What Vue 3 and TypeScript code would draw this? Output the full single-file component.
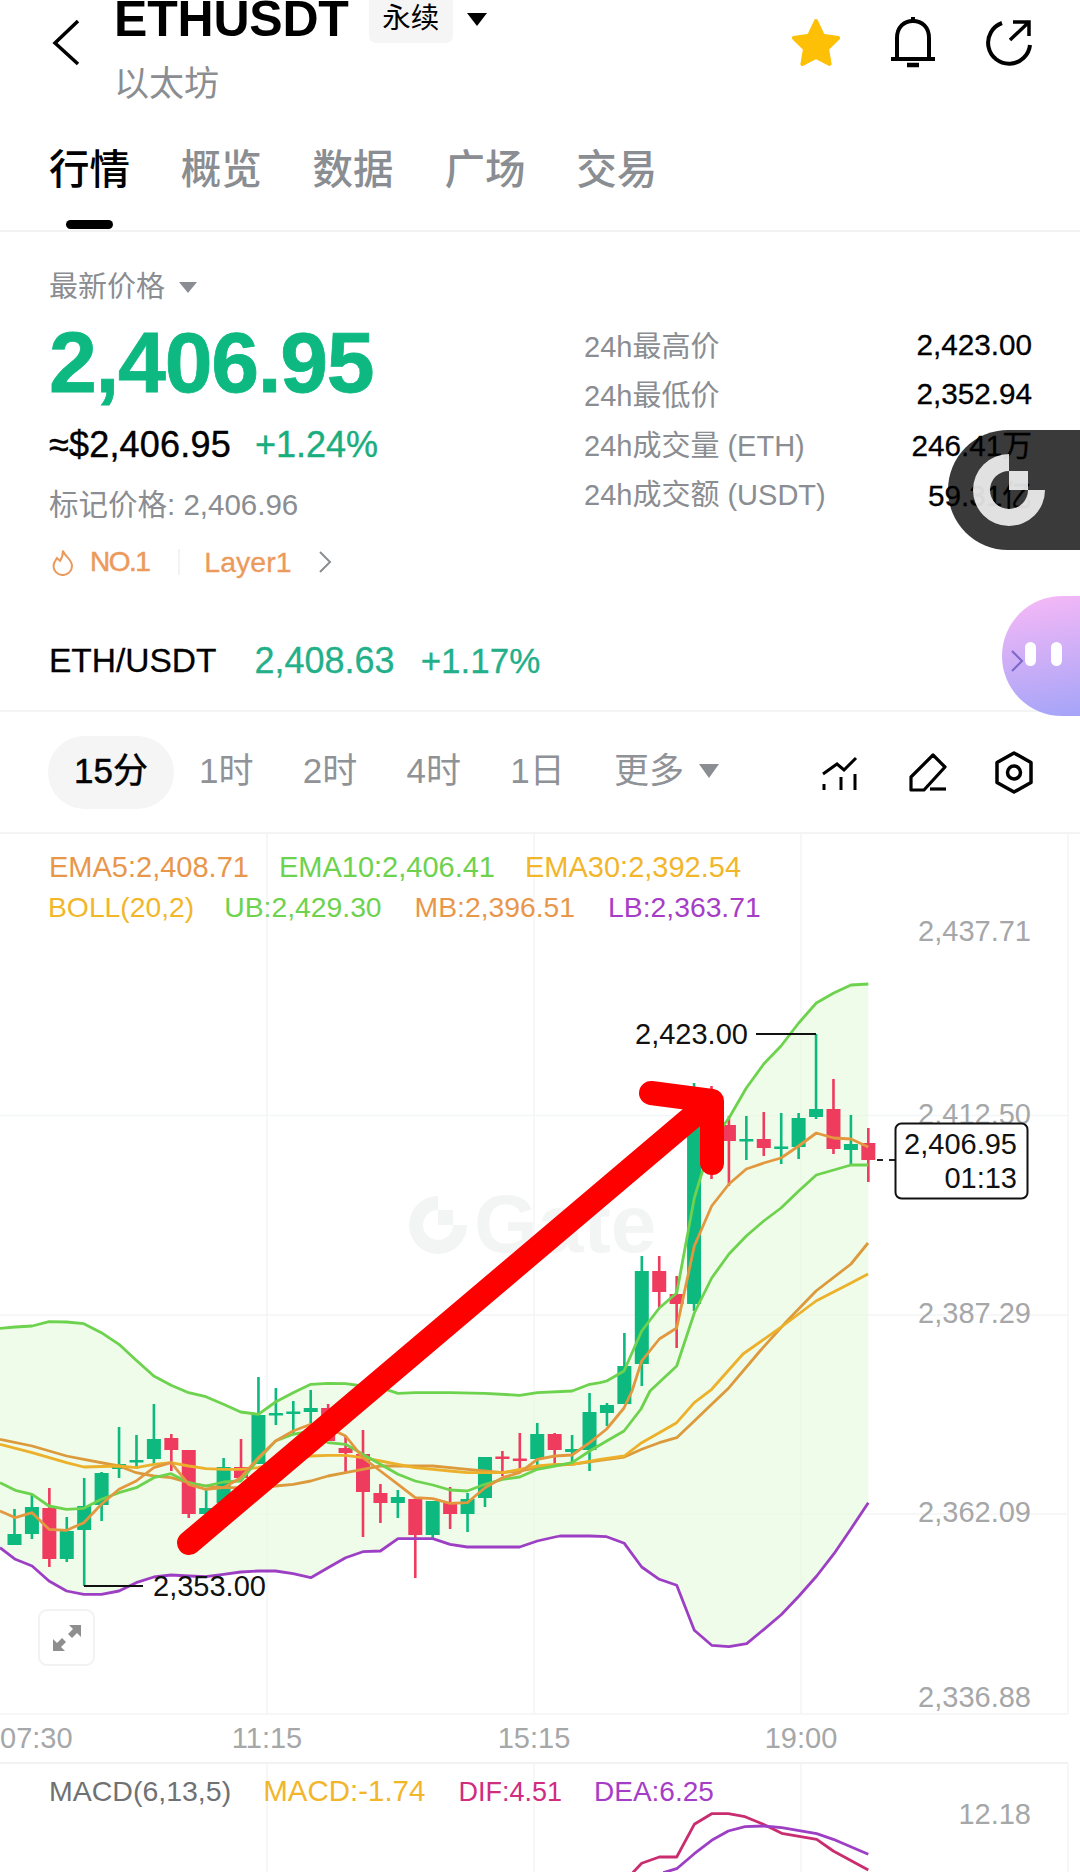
<script setup lang="ts">
type Pt = [number, number];

const tabs = ['行情', '概览', '数据', '广场', '交易'];
const stats = [
  { label: '24h最高价', value: '2,423.00' },
  { label: '24h最低价', value: '2,352.94' },
  { label: '24h成交量 (ETH)', value: '246.41万' },
  { label: '24h成交额 (USDT)', value: '59.31亿' },
];
const periods = ['1时', '2时', '4时', '1日'];

// points were read off zoomed crops, these map them back to page coords
const a = (p: number[][]): Pt[] => p.map(([x, y]) => [x / 2.613, y / 3 + 1200]);
const c = (p: number[][]): Pt[] => p.map(([x, y]) => [x / 3 + 560, y / 3 + 1380]);
const str = (p: Pt[]) => p.map(([x, y]) => `${x.toFixed(1)},${y.toFixed(1)}`).join(' ');

const upper: Pt[] = [
  ...a([[0,382],[40,378],[84,375],[128,362],[174,363],[219,368],[265,395],[311,430],[356,478],[402,525],[447,553],[493,575],[538,587],[584,610],[629,633],[675,640],[720,603],[766,575],[812,550],[857,547],[903,548],[948,555],[994,560],[1040,577],[1085,575],[1176,575],[1267,577],[1358,583],[1404,575],[1495,570],[1541,550],[1568,545]]),
  [606.7,1380],[624,1370],[641.7,1330],[659.3,1307],[676.7,1292],[694.3,1197],[711.7,1140],[729,1117],
  [746.3,1087],[763.7,1063],[781,1045],[798.7,1022],[816.3,1002],[833.7,992],[851,984],[868.3,983],
];
const lower: Pt[] = [
  ...a([[0,1040],[40,1075],[84,1095],[128,1140],[174,1170],[219,1180],[265,1180],[311,1170],[356,1145],[402,1128],[447,1122],[493,1125],[538,1127],[584,1120],[629,1113],[675,1110],[720,1110],[766,1118],[812,1130],[857,1100],[903,1070],[948,1052],[994,1050],[1040,1013],[1085,1013],[1131,1013],[1176,1030],[1221,1038],[1267,1038],[1358,1038],[1404,1020],[1450,1008]]),
  ...c([[0,465],[37,465],[89,465],[140,467],[193,487],[245,558],[298,595],[350,613],[403,748],[455,793],[507,797],[560,788],[612,745],[665,700],[717,645],[770,585],[822,518],[875,440],[925,365]]),
];
const ema10: Pt[] = [
  ...a([[0,845],[40,868],[84,880],[128,915],[174,925],[219,922],[265,895],[311,875],[356,860],[402,830],[447,818],[493,845],[538,855],[584,843],[629,840],[675,775],[720,720],[766,700],[812,690],[857,725],[903,730],[948,760],[994,790],[1040,820],[1085,840],[1131,852],[1176,867],[1221,870],[1267,850],[1313,835],[1358,828],[1404,805],[1450,795],[1495,785],[1541,750]]),
  [606.7,1440],[624,1430],[641,1408],[650,1390],[676.7,1365],[694.3,1312],[711.7,1277],[729,1253],
  [746.3,1235],[763.7,1220],[781,1207],[798.7,1190],[816.3,1174],[833.7,1169],[851,1164],[868.3,1164],
];
const ema5: Pt[] = [
  ...a([[0,930],[40,950],[84,935],[128,985],[174,988],[219,965],[265,910],[311,865],[356,840],[402,800],[447,785],[493,850],[538,865],[584,860],[629,830],[675,770],[720,720],[766,690],[812,670],[857,680],[903,705],[948,770],[994,810],[1040,850],[1085,890],[1131,893],[1176,907],[1221,905],[1267,860],[1313,830],[1358,815],[1404,775],[1450,765],[1495,762],[1541,725]]),
  [606.7,1428],[624,1407],[632,1390],[641.7,1360],[659.3,1338],[676.7,1327],[694.3,1245],[711.7,1205],[729,1183],
  [746.3,1168],[763.7,1162],[781,1157],[798.7,1145],[816.3,1132],[833.7,1137],[851,1138],[868.3,1146],
];
const mb: Pt[] = [
  ...a([[0,715],[84,735],[174,765],[219,775],[311,795],[356,815],[402,825],[447,830],[493,845],[538,855],[584,860],[629,860],[675,860],[720,855],[766,850],[812,840],[857,825],[903,815],[948,805],[994,795],[1040,795],[1085,795],[1131,795],[1176,800],[1221,805],[1267,810],[1313,815],[1358,810],[1404,800],[1450,793],[1495,790],[1568,778]]),
  [624.3,1456],[641.7,1448.3],[659.3,1441.7],[676.7,1436.7],[694.3,1420],[711.7,1403.3],[729,1386.7],[760,1350],[787,1320],[816,1290],[851,1263],[868,1242],
];
const ema30: Pt[] = [
  ...a([[0,730],[84,755],[174,785],[219,798],[311,795],[356,800],[402,790],[447,785],[493,795],[538,803],[584,805],[629,805],[675,800],[720,785],[766,770],[812,765],[857,763],[903,763],[948,770],[994,780],[1040,790],[1085,800],[1131,805],[1176,810],[1221,815],[1267,815],[1313,815],[1358,805],[1404,795],[1450,790],[1495,790],[1568,775]]),
  [624.3,1455],[641.7,1441.7],[659.3,1431.7],[676.7,1421.7],[694.3,1401.7],[711.7,1388.3],[743,1353],[780,1327],[816,1300],[851,1282],[868,1273],
];
const dif = c([[218,1475],[245,1447],[298,1428],[350,1428],[403,1330],[455,1298],[505,1298],[555,1307],[610,1330],[665,1357],[770,1375],[820,1410],[925,1467]]);
const dea = c([[310,1475],[350,1463],[403,1418],[455,1378],[505,1350],[555,1337],[610,1335],[665,1340],[770,1358],[820,1375],[925,1420]]);

const bollArea = str([...upper, ...[...lower].reverse()]);

// [up?, wick top, wick bottom, body top, body bottom]
const rows: [number, number, number, number, number][] = [
  [1,1508,1544,1533,1544],[1,1493,1538,1506,1533],[0,1487,1566,1507,1558],[1,1516,1561,1530,1558],
  [1,1477,1585,1505,1529],[1,1471,1520,1472,1504],[1,1426,1477,1463,1468],[1,1434,1468,1459,1461.5],
  [1,1403,1463,1438,1458],[0,1433,1470,1437,1449],[0,1449,1517,1449,1513],[1,1489,1513,1507,1513],
  [1,1457,1502,1466,1502],[0,1438,1477,1466,1477],[1,1376,1463,1414,1463],[1,1387,1424,1412,1414.5],
  [1,1400,1432,1410.5,1413],[1,1389,1427,1407,1411],[0,1403,1440,1407,1440],[0,1435,1472,1447,1452],
  [0,1429,1536,1453,1491],[0,1483,1522,1492,1502],[1,1489,1517,1496,1502],[0,1498,1577,1498,1534],
  [1,1500,1537,1500,1534],[0,1486,1528,1501,1513],[1,1492,1531,1498,1513],[1,1456,1506,1456,1497],
  [0,1450,1475,1455.5,1458],[0,1432,1470,1457.5,1460],[1,1422,1465,1433,1458],[0,1432,1463,1433,1449],
  [1,1434,1463,1448,1451],[1,1392,1470,1411,1449],[1,1402,1425,1404,1412],[1,1332,1403,1365,1403],
  [1,1255,1385,1270,1363],[0,1255,1307,1270,1291],[0,1275,1347,1293,1303],[1,1082,1310,1115,1303],
  [0,1085,1178,1100,1120],[0,1115,1185,1124,1140],[1,1115,1159,1138,1140.5],[0,1111,1155,1138,1147],
  [1,1112,1163,1145.5,1148],[1,1112,1158,1117,1146],[1,1033,1118,1108,1116],[0,1078,1153,1108,1148],
  [1,1114,1163,1143,1149],[0,1127,1181,1142,1159],
];
const candles = rows.map((r, i) => ({
  x: 14.5 + 17.425 * i,
  color: r[0] ? '#0db97e' : '#ef3b5e',
  wickTop: r[1],
  wickBottom: r[2],
  top: r[3],
  height: r[4] - r[3],
}));

const gridX = [267, 534, 801, 1068];
const gridY = [1114.5, 1314, 1513, 1713];
const priceLabels = [
  { y: 940, text: '2,437.71' },
  { y: 1123, text: '2,412.50' },
  { y: 1322, text: '2,387.29' },
  { y: 1521, text: '2,362.09' },
  { y: 1706, text: '2,336.88' },
];
const timeLabels = [
  { x: 0, text: '07:30', anchor: 'start' },
  { x: 267, text: '11:15', anchor: 'middle' },
  { x: 534, text: '15:15', anchor: 'middle' },
  { x: 801, text: '19:00', anchor: 'middle' },
];
</script>

<template>
  <div class="page">
    <header class="top">
      <svg class="back" width="30" height="50" viewBox="0 0 30 50">
        <polyline points="26,3 3,25 26,46" fill="none" stroke="#000" stroke-width="3.5" />
      </svg>
      <div class="title">
        <div class="symbol-row">
          <span class="symbol">ETHUSDT</span>
          <span class="tag">永续</span>
          <i class="tri tri-black"></i>
        </div>
        <div class="name">以太坊</div>
      </div>
      <div class="top-icons">
        <svg class="star" width="60" height="60" viewBox="0 0 60 60">
          <path d="M30 9l6.8 14.7 15.4 2.2-11.200 10.800 2.600 15.200L30 45l-13.600 7 2.600-15.200L7.800 25.900l15.400-2.200z" fill="#fdc006" stroke="#fdc006" stroke-width="4" stroke-linejoin="round" />
        </svg>
        <svg width="60" height="60" viewBox="0 0 60 60" fill="none" stroke="#000" stroke-width="4">
          <path d="M14 46V26C14 15 21 9 30 9s16 6 16 17v20" />
          <path d="M30 5v5M8 47h44" />
          <path d="M24 53h12" stroke-width="4.5" />
        </svg>
        <svg class="share" width="60" height="60" viewBox="0 0 60 60" fill="none" stroke="#000" stroke-width="4">
          <path d="M24 11A21 21 0 1 0 52 33" />
          <path d="M35 10h16v14M51 10L32 28" stroke-width="3.5" />
        </svg>
      </div>
    </header>

    <nav class="tabs">
      <div v-for="(t, i) in tabs" :key="t" class="tab" :class="{ active: i === 0 }">
        <span>{{ t }}</span>
        <b v-if="i === 0" class="tab-bar"></b>
      </div>
    </nav>

    <section class="quote">
      <div class="quote-row">
        <div class="quote-left">
          <div class="latest">最新价格<i class="tri tri-gray"></i></div>
          <div class="price">2,406.95</div>
          <div class="sub">
            <span class="usd">≈$2,406.95</span>
            <span class="pct">+1.24%</span>
          </div>
          <div class="mark">标记价格: 2,406.96</div>
          <div class="rank">
            <svg width="22" height="27" viewBox="0 0 22 27">
              <path d="M11 1.5C12 7 20 10 20 17a9.2 9 0 0 1-18.500 0c0-3.500 2-5.500 3.500-8 1.500 1.500 3 3 3 3 2-3 3-6 3-10.500z" fill="none" stroke="#ec9a5c" stroke-width="2" />
            </svg>
            <span class="no">NO.1</span>
            <i class="rank-sep"></i>
            <span class="layer">Layer1</span>
            <svg class="rank-more" width="14" height="24" viewBox="0 0 14 24">
              <polyline points="2,2 12,12 2,22" fill="none" stroke="#8a8d91" stroke-width="2" />
            </svg>
          </div>
        </div>
        <div class="quote-right">
          <div v-for="s in stats" :key="s.label" class="stat">
            <span class="stat-label">{{ s.label }}</span>
            <span class="stat-value">{{ s.value }}</span>
          </div>
        </div>
      </div>
      <div class="pair">
        <span class="pair-name">ETH/USDT</span>
        <span class="pair-price">2,408.63</span>
        <span class="pair-pct">+1.17%</span>
      </div>
    </section>

    <section class="periods">
      <span class="period on">15分</span>
      <span v-for="p in periods" :key="p" class="period">{{ p }}</span>
      <span class="period more">更多<i class="tri tri-gray"></i></span>
      <div class="tools">
        <svg width="44" height="44" viewBox="0 0 44 44" fill="none" stroke="#000" stroke-width="3">
          <path d="M5 24L19 14l7 6L38 8" />
          <path d="M6 34v6M23 27v13M37 24v16" />
        </svg>
        <svg width="44" height="44" viewBox="0 0 44 44" fill="none" stroke="#000" stroke-width="3.2">
          <path d="M28 5l12 12-21 23H6V27z" stroke-linejoin="round" />
          <path d="M25 39h16" />
        </svg>
        <svg width="44" height="44" viewBox="0 0 44 44" fill="none" stroke="#000" stroke-width="3.5">
          <path d="M22 3l17 9.5v20L22 42 5 32.5v-20z" stroke-linejoin="round" />
          <circle cx="22" cy="22.5" r="6.5" />
        </svg>
      </div>
    </section>

    <section class="chart">
      <svg class="chart-svg" width="1080" height="1039" viewBox="0 833 1080 1039">
        <g stroke="#f4f5f6" stroke-width="1.5">
          <line v-for="x in gridX" :key="x" :x1="x" y1="833" :x2="x" y2="1713" />
          <line v-for="x in gridX" :key="'m' + x" :x1="x" y1="1763" :x2="x" y2="1872" />
          <line v-for="y in gridY" :key="y" x1="0" :y1="y" x2="1068" :y2="y" />
        </g>
        <line x1="0" y1="1762" x2="1068" y2="1762" stroke="#f1f2f3" stroke-width="2" />

        <g fill="#f3f5f5">
          <path d="M438 1195A29 29 0 1 0 467 1224H453A15 15 0 1 1 438 1209Z" />
          <rect x="438" y="1209" width="15" height="15" />
          <text x="474" y="1251" class="mark-text">Gate</text>
        </g>

        <polygon :points="bollArea" fill="#e4fadc" fill-opacity="0.62" />

        <g v-for="(k, i) in candles" :key="i" :fill="k.color">
          <rect :x="k.x - 1.3" :y="k.wickTop" width="2.6" :height="k.wickBottom - k.wickTop" />
          <rect :x="k.x - 7" :y="k.top" width="14" :height="k.height" />
        </g>

        <g fill="none" stroke-width="2.8" stroke-linejoin="round">
          <polyline :points="str(upper)" stroke="#6dd24d" />
          <polyline :points="str(lower)" stroke="#9d3fc4" />
          <polyline :points="str(mb)" stroke="#dc9a3c" />
          <polyline :points="str(ema30)" stroke="#ecb02a" />
          <polyline :points="str(ema10)" stroke="#6dd24d" />
          <polyline :points="str(ema5)" stroke="#e3983f" />
          <polyline :points="str(dif)" stroke="#c92c6f" />
          <polyline :points="str(dea)" stroke="#9d3fc4" />
        </g>

        <g class="axis">
          <text v-for="p in priceLabels" :key="p.text" x="1031" :y="p.y" text-anchor="end">{{ p.text }}</text>
          <text v-for="t in timeLabels" :key="t.text" :x="t.x" y="1747" :text-anchor="t.anchor">{{ t.text }}</text>
          <text x="1031" y="1823" text-anchor="end">12.18</text>
        </g>

        <polyline points="756,1033 816,1033" fill="none" stroke="#111" stroke-width="1.8" />
        <polyline points="84,1585 143,1585" fill="none" stroke="#111" stroke-width="1.8" />
        <text x="635" y="1043" class="dark-text">2,423.00</text>
        <text x="153" y="1595" class="dark-text">2,353.00</text>

        <line x1="877" y1="1159" x2="895" y2="1159" stroke="#222" stroke-width="2" stroke-dasharray="6 6" />
        <rect x="895.5" y="1122.5" width="132" height="75" rx="6" fill="#fff" stroke="#111" stroke-width="2" />
        <text x="1017" y="1153" text-anchor="end" class="dark-text">2,406.95</text>
        <text x="1017" y="1187" text-anchor="end" class="dark-text">01:13</text>

        <g fill="none" stroke="#ff0000" stroke-width="24" stroke-linecap="round" stroke-linejoin="round">
          <line x1="189" y1="1542" x2="704" y2="1106" />
          <polyline points="651,1092 712,1100 712,1162" />
        </g>
      </svg>

      <div class="legend">
        <div class="legend-row">
          <span class="c-orange">EMA5:2,408.71</span>
          <span class="c-green">EMA10:2,406.41</span>
          <span class="c-amber">EMA30:2,392.54</span>
        </div>
        <div class="legend-row tight">
          <span class="c-amber boll">BOLL(20,2)</span>
          <span class="c-green">UB:2,429.30</span>
          <span class="c-orange">MB:2,396.51</span>
          <span class="c-purple">LB:2,363.71</span>
        </div>
      </div>

      <div class="expand">
        <svg width="32" height="32" viewBox="0 0 32 32" fill="#8e8e8e">
          <path d="M18 3h12v12l-4-4-5 5-4-4 5-5zM14 29H2V17l4 4 5-5 4 4-5 5z" />
        </svg>
      </div>

      <div class="macd">
        <span class="c-gray">MACD(6,13,5)</span>
        <span class="c-amber macd-val">MACD:-1.74</span>
        <span class="c-pink dif">DIF:4.51</span>
        <span class="c-purple dea">DEA:6.25</span>
      </div>
    </section>

    <div class="float-pill"></div>
    <svg class="float-logo" width="72" height="72" viewBox="0 0 72 72" fill="#fff">
      <path d="M36 0A36 36 0 1 0 72 36H55A19 19 0 1 1 36 17Z" />
      <rect x="36" y="17" width="19" height="19" />
    </svg>

    <div class="bubble">
      <svg class="bubble-arrow" width="14" height="24" viewBox="0 0 14 24">
        <polyline points="2,2 12,12 2,22" fill="none" stroke="#7b68c8" stroke-width="2" />
      </svg>
      <i></i><i></i>
    </div>
  </div>
</template>

<style scoped>
.page {
  position: relative;
  width: 1080px;
  height: 1872px;
  overflow: hidden;
  background: #fff;
  color: #000;
  font-family: "Liberation Sans", "Noto Sans CJK SC", sans-serif;
}
.tri {
  display: inline-block;
  width: 0;
  height: 0;
  border-left: 10px solid transparent;
  border-right: 10px solid transparent;
  border-top: 13px solid #000;
}
.tri-gray { border-top-color: #8a8d91; }

.top {
  display: flex;
  height: 118px;
  padding: 0 42px 0 52px;
}
.back { margin-top: 18px; }
.title { margin-left: 32px; }
.symbol-row {
  display: flex;
  align-items: flex-start;
  height: 62px;
}
.symbol {
  margin-top: -6px;
  font-size: 50px;
  line-height: 50px;
  font-weight: 700;
  letter-spacing: -0.2px;
}
.tag {
  margin-left: 20px;
  width: 84px;
  height: 43px;
  border-radius: 0 0 7px 7px;
  background: #f5f5f5;
  font-size: 28.5px;
  line-height: 37px;
  text-align: center;
}
.tri-black { margin: 13px 0 0 14px; }
.name {
  font-size: 35px;
  line-height: 44px;
  color: #8a8d91;
}
.top-icons {
  display: flex;
  gap: 36px;
  margin: 12px 0 0 auto;
}
.star { margin: 0 1.5px 0 -1.5px; }
.share { margin-left: -1px; }

.tabs {
  display: flex;
  gap: 50.8px;
  height: 112px;
  padding-left: 49px;
  border-bottom: 2px solid #f2f3f3;
}
.tab {
  display: flex;
  flex-direction: column;
  align-items: center;
  padding-top: 27px;
  font-size: 40.5px;
  line-height: 50px;
  font-weight: 500;
  color: #8a8d91;
}
.tab.active { color: #000; }
.tab-bar {
  display: block;
  width: 47px;
  height: 9px;
  margin-top: 25px;
  border-radius: 5px;
  background: #000;
}

.quote {
  height: 478px;
  border-bottom: 2px solid #f3f4f4;
}
.quote-row { display: flex; }
.quote-left {
  width: 535px;
  margin-left: 49px;
  flex: none;
}
.latest {
  display: flex;
  align-items: center;
  margin-top: 35px;
  font-size: 29px;
  line-height: 40px;
  color: #8a8d91;
}
.latest .tri {
  margin-left: 14px;
  border-left-width: 9px;
  border-right-width: 9px;
  border-top-width: 11px;
}
.price {
  margin-top: 12px;
  font-size: 86px;
  line-height: 86px;
  font-weight: 700;
  letter-spacing: -1.3px;
  -webkit-text-stroke: 0.8px;
  color: #0db980;
}
.sub {
  display: flex;
  gap: 24px;
  margin-top: 18px;
  font-size: 36px;
  line-height: 44px;
  -webkit-text-stroke: 0.4px;
}
.usd { letter-spacing: 0.2px; }
.pct { color: #1aae7f; }
.mark {
  margin-top: 18px;
  font-size: 29.5px;
  line-height: 40px;
  color: #8a8d91;
}
.rank {
  display: flex;
  align-items: center;
  margin-top: 19px;
  margin-left: 3px;
  height: 36px;
  font-size: 28px;
  color: #ec9a5c;
}
.no {
  margin-left: 16px;
  letter-spacing: -1.5px;
  -webkit-text-stroke: 0.5px;
}
.rank-sep {
  width: 2px;
  height: 26px;
  margin: 0 24px 0 29px;
  background: #f3f3f3;
}
.layer {
  font-size: 28.5px;
  -webkit-text-stroke: 0.3px;
}
.rank-more { margin-left: 26px; }
.quote-right {
  flex: 1;
  margin-top: 87px;
  padding-right: 48px;
}
.stat {
  display: flex;
  justify-content: space-between;
  height: 49.5px;
  align-items: center;
  font-size: 29.7px;
}
.stat-label {
  font-size: 29px;
  color: #8a8d91;
}
.stat-value {
  position: relative;
  z-index: 2;
  margin-top: 2px;
  -webkit-text-stroke: 0.3px;
}
.pair {
  display: flex;
  margin: 59px 0 0 49px;
  font-size: 33.5px;
  line-height: 44px;
  -webkit-text-stroke: 0.3px;
}
.pair-price {
  margin-left: 38px;
  font-size: 36px;
  color: #22b08a;
}
.pair-pct {
  margin-left: 26px;
  font-size: 35px;
  color: #22b08a;
}

.periods {
  display: flex;
  align-items: center;
  height: 120px;
  padding: 0 44px 0 48px;
  gap: 49.3px;
  border-bottom: 2px solid #f3f4f4;
  font-size: 35px;
  color: #8f9296;
}
.period { padding-bottom: 10px; }
.period.on {
  height: 73px;
  padding: 0 26px;
  margin-right: -24.3px;
  border-radius: 37px;
  background: #f5f5f5;
  color: #000;
  line-height: 69px;
  -webkit-text-stroke: 0.5px;
}
.more {
  display: flex;
  align-items: center;
}
.more .tri {
  margin: 8px 0 0 15px;
  border-top-width: 14px;
}
.tools {
  display: flex;
  gap: 43px;
  margin-left: auto;
}

.chart {
  position: relative;
  height: 1039px;
}
.chart-svg { display: block; }
.mark-text {
  font-size: 82px;
  font-weight: 700;
}
.axis {
  font-size: 29px;
  fill: #a5a7a9;
}
.dark-text {
  font-size: 29px;
  fill: #111;
}
.legend {
  position: absolute;
  left: 49px;
  top: 13px;
  font-size: 29px;
  line-height: 40px;
}
.legend-row {
  display: flex;
  gap: 30px;
}
.legend-row.tight {
  gap: 33px;
  margin-left: -1px;
  font-size: 28.3px;
}
.boll { margin-right: -3px; }
.macd {
  position: absolute;
  left: 49px;
  top: 937px;
  display: flex;
  align-items: baseline;
  gap: 32px;
  font-size: 28.5px;
  line-height: 40px;
}
.macd-val { font-size: 29.5px; }
.dif {
  margin-left: 1px;
  font-size: 27px;
}
.dea { font-size: 28px; }
.c-orange { color: #e8974a; }
.c-green { color: #6dd24d; }
.c-amber { color: #f2b62b; }
.c-purple { color: #a63dc6; }
.c-pink { color: #d02d7f; }
.c-gray { color: #6f7173; }
.expand {
  position: absolute;
  left: 38px;
  top: 775px;
  width: 57px;
  height: 57px;
  box-sizing: border-box;
  display: flex;
  align-items: center;
  justify-content: center;
  border: 2px solid #f2f2f2;
  border-radius: 9px;
  background: #fff;
}

.float-pill {
  position: absolute;
  left: 948px;
  top: 430px;
  width: 132px;
  height: 120px;
  border-radius: 60px 0 0 60px;
  background: #3a3a3a;
}
.float-logo {
  position: absolute;
  left: 973px;
  top: 454px;
  z-index: 3;
  opacity: 0.85;
}
.bubble {
  position: absolute;
  left: 1002px;
  top: 596px;
  width: 78px;
  height: 120px;
  border-radius: 60px 0 0 60px;
  background: linear-gradient(170deg, #f8b9f6, #a5a4f8);
}
.bubble i {
  position: absolute;
  top: 46px;
  width: 11px;
  height: 24px;
  border-radius: 6px;
  background: #fff;
}
.bubble i:nth-of-type(1) { left: 23px; }
.bubble i:nth-of-type(2) { left: 49px; }
.bubble-arrow {
  position: absolute;
  left: 8px;
  top: 53px;
}
</style>
